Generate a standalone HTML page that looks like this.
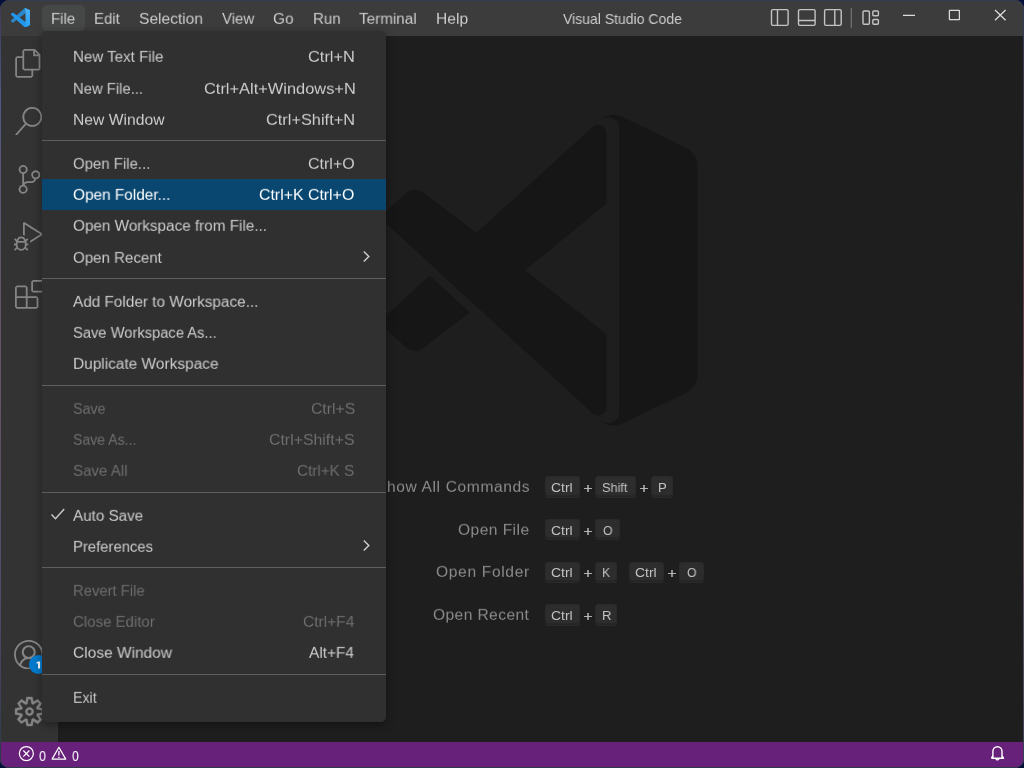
<!DOCTYPE html>
<html><head><meta charset="utf-8"><title>Visual Studio Code</title>
<style>
html,body{margin:0;padding:0;}
body{width:1024px;height:768px;overflow:hidden;background:#020f3a;font-family:"Liberation Sans",sans-serif;position:relative;}
#win{position:absolute;left:0;top:0;width:1024px;height:768px;border-radius:9px;overflow:hidden;background:#1e1e1e;}
#frame{position:absolute;left:0;top:0;width:1022px;height:766px;border:1px solid #343b52;border-bottom-color:#303a4a;border-radius:9px;z-index:20;pointer-events:none;}
#title{position:absolute;left:0;top:0;width:1024px;height:36px;background:#3c3c3c;}
#act{position:absolute;left:0;top:36px;width:57.6px;height:706px;background:#333333;}
#status{position:absolute;left:0;top:742px;width:1024px;height:26px;background:#68217a;}
.t{position:absolute;white-space:nowrap;line-height:normal;z-index:6;transform-origin:0 0;will-change:transform;}
.t.w{z-index:1;}
#filebtn{position:absolute;left:42.3px;top:5px;width:42.4px;height:25.6px;border-radius:5px;background:#464747;}
#menu{position:absolute;left:42px;top:31px;width:344px;height:690.7px;border-radius:5.5px;background:#303031;box-shadow:0 2.4px 9.6px rgba(0,0,0,0.36);z-index:3;}
.sep{position:absolute;left:42px;width:344px;height:1px;background:#5e5e5e;z-index:4;}
.sel{position:absolute;left:42px;width:344px;height:31.3px;background:#094771;z-index:4;}
.chev{position:absolute;z-index:5;}
.ai{position:absolute;z-index:1;}
.key{position:absolute;border-radius:4px;background:#2d2d2d;box-shadow:inset 0 -1.3px 0 #2b2b2b,inset 0 -2.6px 0 #232323,inset 0 0 0 1px #2a2a2a;z-index:1;}
.kt{position:absolute;white-space:nowrap;font-size:13.2px;color:#c4c4c4;line-height:normal;z-index:1;}
</style></head>
<body>
<div id="win">
  <div id="title"></div>
  <div id="filebtn"></div>
  <div id="act"></div>
  <div id="status"></div>
  <svg class="ai" style="left:384.8px;top:113.6px;overflow:visible" width="312.4" height="312.4" viewBox="0 0 100 100" fill="#161616">
 <defs>
  <clipPath id="cu"><polygon points="-5,-5 105,-5 105,131.29 -5,30.08"/></clipPath>
  <clipPath id="cl"><polygon points="-5,33.98 105,135.19 105,150 -5,150"/></clipPath>
 </defs>
 <path d="M70.87 28.75 L44.85 50 L12.1338 74.9905 C10.5347 76.2036 8.29793 76.1042 6.81272 74.7541 L1.30308 69.7452 C-0.513607 68.0937 -0.515693 65.2373 1.29858 63.5832 L66.44 4.19 A2.65 2.65 0 0 1 70.87 6.15 Z" clip-path="url(#cu)"/>
 <path d="M70.87 28.75 L44.85 50 L12.1338 74.9905 C10.5347 76.2036 8.29793 76.1042 6.81272 74.7541 L1.30308 69.7452 C-0.513607 68.0937 -0.515693 65.2373 1.29858 63.5832 L66.44 4.19 A2.65 2.65 0 0 1 70.87 6.15 Z" clip-path="url(#cl)"/>
 <path d="M12.1338 25.0095 L44.85 50 L70.87 70.39 L70.87 93.85 A2.65 2.65 0 0 1 66.44 95.81 L1.6 36.15 C-0.3 34.6 -0.513607 31.9063 1.30308 30.2548 L6.81272 25.2459 C8.29793 23.8958 10.5347 23.7964 12.1338 25.0095Z"/>
 <path d="M75.8578 99.1263C73.4721 100.274 70.6219 99.7885 68.75 97.9166C71.0564 100.223 75 98.5895 75 95.3278V4.67213C75 1.41039 71.0564 -0.223106 68.75 2.08329C70.6219 0.211402 73.4721 -0.273666 75.8578 0.873633L96.4587 10.7807C98.6234 11.8217 100 14.4112 100 16.4132V83.5871C100 85.9891 98.6234 88.1786 96.4586 89.2196L75.8578 99.1263Z"/>
</svg>
<div class="key" style="left:545.3px;top:475.9px;width:34.5px;height:22.1px"></div>
<div class="key" style="left:594.8px;top:475.9px;width:41.2px;height:22.1px"></div>
<div class="key" style="left:650.8px;top:475.9px;width:21.8px;height:22.1px"></div>
<div class="key" style="left:545.3px;top:519px;width:34.5px;height:21.2px"></div>
<div class="key" style="left:594.8px;top:519px;width:25.2px;height:21.2px"></div>
<div class="key" style="left:545.3px;top:561.7px;width:34.5px;height:21.1px"></div>
<div class="key" style="left:594.8px;top:561.7px;width:22.0px;height:21.1px"></div>
<div class="key" style="left:629.3px;top:561.7px;width:34.6px;height:21.1px"></div>
<div class="key" style="left:679.1px;top:561.7px;width:24.7px;height:21.1px"></div>
<div class="key" style="left:545.3px;top:604.4px;width:34.5px;height:21.7px"></div>
<div class="key" style="left:594.8px;top:604.4px;width:22.0px;height:21.7px"></div>
<svg class="ai" style="left:540px;top:470px" width="180" height="170" viewBox="540 470 180 170" fill="none"><path d="M584 488.5H592" stroke="#aeaeae" stroke-width="1"/><path d="M588 485V492" stroke="#c0c0c0" stroke-width="1.4"/><path d="M640 488.5H648" stroke="#aeaeae" stroke-width="1"/><path d="M644 485V492" stroke="#c0c0c0" stroke-width="1.4"/><path d="M584 531.5H592" stroke="#aeaeae" stroke-width="1"/><path d="M588 528V535" stroke="#c0c0c0" stroke-width="1.4"/><path d="M584 573.5H592" stroke="#aeaeae" stroke-width="1"/><path d="M588 570V577" stroke="#c0c0c0" stroke-width="1.4"/><path d="M668 573.5H676" stroke="#aeaeae" stroke-width="1"/><path d="M672 570V577" stroke="#c0c0c0" stroke-width="1.4"/><path d="M584 616.5H592" stroke="#aeaeae" stroke-width="1"/><path d="M588 613V620" stroke="#c0c0c0" stroke-width="1.4"/></svg>
  <svg class="ai" style="left:10.9px;top:7.8px;z-index:2" width="19.3" height="19.3" viewBox="0 0 100 100">
 <defs><linearGradient id="lg1" x1="0" y1="0" x2="0" y2="1"><stop offset="0" stop-color="#4fb2f8"/><stop offset="1" stop-color="#22a0f6"/></linearGradient></defs>
 <path fill="#2b87cb" d="M96.4614 10.7962L75.8569 0.875542C73.4719 -0.272773 70.6217 0.211611 68.75 2.08333L1.29858 63.5832C-0.515693 65.2373 -0.513607 68.0937 1.30308 69.7452L6.81272 74.7541C8.29793 76.1042 10.5347 76.2036 12.1338 74.9905L93.3609 13.3699C96.086 11.3026 100 13.2462 100 16.6667V16.4275C100 14.0265 98.6246 11.8378 96.4614 10.7962Z"/>
 <path fill="#2197ec" d="M96.4614 89.2038L75.8569 99.1245C73.4719 100.273 70.6217 99.7884 68.75 97.9167L1.29858 36.4169C-0.515693 34.7627 -0.513607 31.9063 1.30308 30.2548L6.81272 25.2459C8.29793 23.8958 10.5347 23.7964 12.1338 25.0095L93.3609 86.6301C96.086 88.6974 100 86.7538 100 83.3334V83.5726C100 85.9735 98.6246 88.1622 96.4614 89.2038Z"/>
 <path fill="url(#lg1)" d="M75.8578 99.1263C73.4721 100.274 70.6219 99.7885 68.75 97.9166C71.0564 100.223 75 98.5895 75 95.3278V4.67213C75 1.41039 71.0564 -0.223106 68.75 2.08329C70.6219 0.211402 73.4721 -0.273666 75.8578 0.873633L96.4587 10.7807C98.6234 11.8217 100 14.0112 100 16.4132V83.5871C100 85.9891 98.6234 88.1786 96.4586 89.2196L75.8578 99.1263Z"/>
</svg>
<!-- layout controls -->
<svg class="ai" style="left:768px;top:6px;z-index:2" width="116" height="24" viewBox="768 6 116 24" fill="none" stroke="#c4c4c4" stroke-width="1.4">
 <rect x="771.5" y="9.6" width="16.6" height="15.8" rx="1.3"/><line x1="777.5" y1="9.6" x2="777.5" y2="25.4"/>
 <rect x="798.5" y="9.6" width="16.6" height="15.8" rx="1.3"/><line x1="798.5" y1="20.5" x2="815.1" y2="20.5"/>
 <rect x="824.6" y="9.6" width="16.6" height="15.8" rx="1.3"/><line x1="834.8" y1="9.6" x2="834.8" y2="25.4"/>
 <line x1="851.3" y1="7.9" x2="851.3" y2="27.8" stroke="#7a7a7a" stroke-width="1.1"/>
 <rect x="863" y="11" width="6.4" height="13.3" rx="1.2"/>
 <rect x="872.8" y="11" width="5.6" height="4.8" rx="1"/>
 <rect x="872.8" y="19.5" width="5.6" height="4.8" rx="1"/>
</svg>
<!-- window controls -->
<svg class="ai" style="left:896px;top:4px;z-index:2" width="120" height="24" viewBox="896 4 120 24" fill="none" stroke="#dcdcdc" stroke-width="1.25">
 <line x1="903" y1="15.4" x2="915" y2="15.4"/>
 <rect x="949.4" y="10.4" width="10" height="9.2" rx="0.3"/>
 <path d="M995 10 L1005.6 20.3 M1005.6 10 L995 20.3"/>
</svg>
<!-- activity bar icons (24 viewBox, 28.8px) -->
<svg class="ai" style="left:14.4px;top:49px" width="28.8" height="28.8" viewBox="0 0 24 24" fill="#858585"><path d="M17.5 0h-9L7 1.500V6H2.500L1 7.500v15.070L2.500 24h12.070L16 22.570V18h4.700l1.300-1.430V4.500L17.500 0zm0 2.120l2.380 2.380H17.500V2.120zm-3 20.380h-12v-15H7v9.070L8.500 18h6v4.500zm6-6h-12v-15H16V6h4.500v10.500z"/></svg>
<svg class="ai" style="left:14.4px;top:106.6px" width="28.8" height="28.8" viewBox="0 0 24 24" fill="#858585"><path d="M15.250 0a8.250 8.250 0 0 0-6.180 13.720L1 22.880l1.120 1 8.050-9.120A8.251 8.251 0 1 0 15.250.010V0zm0 15a6.750 6.750 0 1 1 0-13.500 6.750 6.750 0 0 1 0 13.500z"/></svg>
<svg class="ai" style="left:14.9px;top:165.2px" width="28.8" height="28.8" viewBox="0 0 24 24" fill="#858585"><path d="M21.007 8.222A3.738 3.738 0 0 0 15.045 5.200a3.737 3.737 0 0 0 1.156 6.583 2.988 2.988 0 0 1-2.668 1.670h-2.990a4.456 4.456 0 0 0-2.989 1.165V7.400a3.737 3.737 0 1 0-1.494 0v9.117a3.776 3.776 0 1 0 1.816.099 2.990 2.990 0 0 1 2.668-1.667h2.990a4.484 4.484 0 0 0 4.223-3.039 3.736 3.736 0 0 0 3.250-3.687zM4.565 3.738a2.242 2.242 0 1 1 4.484 0 2.242 2.242 0 0 1-4.484 0zm4.484 16.441a2.242 2.242 0 1 1-4.484 0 2.242 2.242 0 0 1 4.484 0zm8.221-9.715a2.242 2.242 0 1 1 0-4.485 2.242 2.242 0 0 1 0 4.485z"/></svg>
<svg class="ai" style="left:14.4px;top:221.8px" width="28.8" height="28.8" viewBox="0 0 24 24" fill="#858585"><path d="M10.940 13.500l-1.320 1.320a3.730 3.730 0 0 0-7.240 0L1.060 13.500 0 14.560l1.720 1.720-.220.220V18H0v1.500h1.500v.080c.077.489.214.966.410 1.420L0 22.940 1.060 24l1.650-1.650A4.308 4.308 0 0 0 6 24a4.310 4.310 0 0 0 3.290-1.650L10.940 24 12 22.940 10.090 21c.198-.464.336-.951.410-1.450v-.100H12V18h-1.500v-1.500l-.220-.220L12 14.560l-1.060-1.060zM6 13.500a2.250 2.250 0 0 1 2.250 2.250h-4.500A2.250 2.250 0 0 1 6 13.500zm3 6a3.330 3.330 0 0 1-3 3 3.330 3.330 0 0 1-3-3v-2.250h6v2.250zm14.760-9.900v1.260L13.500 17.370V15.600l8.500-5.370L9 2v9.460a5.070 5.070 0 0 0-1.500-.720V.630L8.640 0l15.120 9.600z"/></svg>
<svg class="ai" style="left:15px;top:280.4px" width="28.8" height="28.8" viewBox="0 0 24 24" fill="#858585"><path d="M13.500 1.500L15 0h7.500L24 1.500V9l-1.500 1.500H15L13.500 9V1.500zm1.500 0V9h7.500V1.500H15zM0 15V6l1.500-1.500H9L10.500 6v7.500H18l1.500 1.500v7.500L18 24H1.500L0 22.500V15zm9-1.500V6H1.500v7.500H9zM9 15H1.500v7.500H9V15zm1.500 7.500H18V15h-7.500v7.500z"/></svg>
<svg class="ai" style="left:14px;top:639.6px" width="29.5" height="29.5" viewBox="0 0 16 16" fill="#858585"><path d="M16 7.992C16 3.580 12.416 0 8 0S0 3.580 0 7.992c0 2.430 1.104 4.620 2.832 6.090.016.016.032.016.032.032.144.112.288.224.448.336.080.048.144.111.224.175A7.980 7.980 0 0 0 8.016 16a7.980 7.980 0 0 0 4.480-1.375c.080-.048.144-.111.224-.160.144-.111.304-.223.448-.335.016-.016.032-.016.032-.032 1.696-1.487 2.800-3.676 2.800-6.106zm-8 7.001c-1.504 0-2.880-.480-4.016-1.279.016-.128.048-.255.080-.383a4.170 4.170 0 0 1 .416-.991c.176-.304.384-.576.640-.816.240-.240.528-.463.816-.639.304-.176.624-.304.976-.400A4.150 4.150 0 0 1 8 10.342a4.185 4.185 0 0 1 2.928 1.166c.368.368.656.800.864 1.295.112.288.192.592.240.911A7.030 7.030 0 0 1 8 14.993zm-2.448-7.400a2.490 2.490 0 0 1-.208-1.024c0-.351.064-.703.208-1.023.144-.320.336-.607.576-.847.240-.240.528-.431.848-.575.320-.144.672-.208 1.024-.208.368 0 .704.064 1.024.208.320.144.608.336.848.575.240.240.432.528.576.847.144.320.208.672.208 1.023 0 .368-.064.704-.208 1.023a2.840 2.840 0 0 1-.576.848 2.840 2.840 0 0 1-.848.575 2.715 2.715 0 0 1-2.064 0 2.840 2.840 0 0 1-.848-.575 2.526 2.526 0 0 1-.560-.848zm7.424 5.306c0-.032-.016-.048-.016-.080a5.220 5.220 0 0 0-.688-1.406 4.883 4.883 0 0 0-1.088-1.135 5.207 5.207 0 0 0-1.040-.608 2.820 2.820 0 0 0 .464-.383 4.200 4.200 0 0 0 .624-.784 3.624 3.624 0 0 0 .528-1.934 3.710 3.710 0 0 0-.288-1.470 3.799 3.799 0 0 0-.816-1.199 3.845 3.845 0 0 0-1.200-.800 3.720 3.720 0 0 0-1.472-.287 3.720 3.720 0 0 0-1.472.288 3.631 3.631 0 0 0-1.200.815 3.840 3.840 0 0 0-.800 1.199 3.710 3.710 0 0 0-.288 1.470c0 .352.048.688.144 1.007.096.336.224.640.400.927.160.288.384.544.624.784.144.144.304.271.480.383a5.120 5.120 0 0 0-1.040.624c-.416.320-.784.703-1.088 1.119a4.999 4.999 0 0 0-.688 1.406c-.16.032-.16.064-.16.080C1.776 11.636.992 9.910.992 7.992.992 4.140 4.144.991 8 .991s7.008 3.149 7.008 7.001a6.960 6.960 0 0 1-2.032 4.907z"/></svg>
<div class="ai" style="left:28.8px;top:655.2px;width:19.2px;height:19.2px;border-radius:10px;background:#007acc;z-index:2"></div>
<svg class="ai" style="left:30px;top:656px;z-index:2" width="16" height="16" viewBox="30 656 16 16"><path d="M38 661.4H40.1V668.6H38V663.1L36.6 664V662.5Z" fill="#fff"/></svg>
<svg class="ai" style="left:12.7px;top:694.9px" width="33" height="33" viewBox="0 0 16 16" fill="#858585" stroke="#858585" stroke-width="0.2" stroke-linejoin="round"><path fill-rule="evenodd" d="M9.100 4.400L8.600 2H7.400l-.500 2.400-.700.300-2-1.300-.900.800 1.300 2-.200.700-2.400.500v1.200l2.400.500.300.800-1.300 2 .800.800 2-1.300.800.300.400 2.300h1.200l.500-2.400.800-.300 2 1.300.800-.800-1.300-2 .300-.800 2.300-.400V7.400l-2.400-.500-.300-.800 1.300-2-.800-.800-2 1.300-.700-.200zM9.400 1l.500 2.400L12 2.100l2 2-1.400 2.100 2.400.400v2.800l-2.400.500L14 12l-2 2-2.100-1.400-.500 2.400H6.600l-.500-2.400L4 13.900l-2-2 1.400-2.100L1 9.400V6.600l2.400-.500L2.100 4l2-2 2.100 1.400.400-2.400h2.800zm.600 7c0 1.100-.900 2-2 2s-2-.900-2-2 .900-2 2-2 2 .900 2 2zM8 9c.600 0 1-.400 1-1s-.400-1-1-1-1 .400-1 1 .400 1 1 1z"/></svg>
<!-- status bar -->
<svg class="ai" style="left:16px;top:743px;z-index:2" width="70" height="22" viewBox="16 743 70 22" fill="none" stroke="#ffffff" stroke-width="1.25">
 <circle cx="26.35" cy="753.5" r="7"/>
 <path d="M23.3 750.5 L29.4 756.6 M29.4 750.5 L23.3 756.6"/>
 <path d="M58.9 747.3 L65.7 759.1 L52.1 759.1 Z" stroke-linejoin="round"/>
 <path d="M58.9 751 L58.9 755.6 M58.9 756.7 L58.9 758" stroke-width="1.3"/>
</svg>
<svg class="ai" style="left:988px;top:743px;z-index:2" width="20" height="22" viewBox="988 743 20 22" fill="none" stroke="#ffffff" stroke-width="1.4">
 <path d="M992.9 757.9 L992.9 751.3 A4.55 4.55 0 0 1 1002 751.3 L1002 757.9 M991.4 758.2 L1003.5 758.2 L1002.2 756 M991.4 758.2 L992.7 756" stroke-linejoin="round"/>
 <path d="M996 758.4 A1.45 1.45 0 0 0 998.9 758.4"/>
</svg>

  <div id="menu"></div>
  <div class="sep" style="top:140px"></div>
<div class="sel" style="top:178.9px"></div>
<svg class="chev" style="left:358px;top:247px" width="16" height="20" viewBox="358 247 16 20"><path d="M363.8 251.6 L368.8 256.5 L363.8 261.4" fill="none" stroke="#cccccc" stroke-width="1.45"/></svg>
<div class="sep" style="top:278px"></div>
<div class="sep" style="top:385px"></div>
<div class="sep" style="top:492px"></div>
<svg class="chev" style="left:46px;top:503px" width="24" height="22" viewBox="46 503 24 22"><path d="M51.5 514.5 L55.5 518.7 L64.2 509" fill="none" stroke="#cccccc" stroke-width="1.4"/></svg>
<svg class="chev" style="left:358px;top:536px" width="16" height="20" viewBox="358 536 16 20"><path d="M363.8 540.6 L368.8 545.5 L363.8 550.4" fill="none" stroke="#cccccc" stroke-width="1.45"/></svg>
<div class="sep" style="top:567px"></div>
<div class="sep" style="top:674px"></div>
  <span class="t " style="left:51.34px;top:11.17px;font-size:15.6px;color:#cccccc;transform:scale(0.9593,0.9167)">File</span>
<span class="t " style="left:93.54px;top:11.17px;font-size:15.6px;color:#cccccc;transform:scale(0.9609,0.9167)">Edit</span>
<span class="t " style="left:138.60px;top:11.17px;font-size:15.6px;color:#cccccc;transform:scale(0.9960,0.9167)">Selection</span>
<span class="t " style="left:221.90px;top:11.17px;font-size:15.6px;color:#cccccc;transform:scale(0.9618,0.9167)">View</span>
<span class="t " style="left:273.08px;top:11.17px;font-size:15.6px;color:#cccccc;transform:scale(0.9828,0.9167)">Go</span>
<span class="t " style="left:312.53px;top:11.17px;font-size:15.6px;color:#cccccc;transform:scale(0.9653,0.9167)">Run</span>
<span class="t " style="left:359.40px;top:11.17px;font-size:15.6px;color:#cccccc;transform:scale(0.9784,0.9167)">Terminal</span>
<span class="t " style="left:435.50px;top:11.17px;font-size:15.6px;color:#cccccc;transform:scale(1.0018,0.9167)">Help</span>
<span class="t " style="left:563.20px;top:11.00px;font-size:14.4px;color:#cccccc;transform:scale(0.9727,1.0000)">Visual Studio Code</span>
<span class="t " style="left:73.13px;top:49.17px;font-size:15.6px;color:#cccccc;transform:scale(0.9683,0.9167)">New Text File</span>
<span class="t " style="left:308.40px;top:49.17px;font-size:15.6px;color:#cccccc;transform:scale(1.0517,0.9167)">Ctrl+N</span>
<span class="t " style="left:73.15px;top:81.17px;font-size:15.6px;color:#cccccc;transform:scale(0.9507,0.9167)">New File...</span>
<span class="t " style="left:203.92px;top:81.17px;font-size:15.6px;color:#cccccc;transform:scale(1.0519,0.9167)">Ctrl+Alt+Windows+N</span>
<span class="t " style="left:73.09px;top:112.17px;font-size:15.6px;color:#cccccc;transform:scale(1.0052,0.9167)">New Window</span>
<span class="t " style="left:266.24px;top:112.17px;font-size:15.6px;color:#cccccc;transform:scale(1.0482,0.9167)">Ctrl+Shift+N</span>
<span class="t " style="left:72.60px;top:156.17px;font-size:15.6px;color:#cccccc;transform:scale(0.9589,0.9167)">Open File...</span>
<span class="t " style="left:308.40px;top:156.17px;font-size:15.6px;color:#cccccc;transform:scale(1.0273,0.9167)">Ctrl+O</span>
<span class="t " style="left:72.60px;top:187.17px;font-size:15.6px;color:#ffffff;transform:scale(0.9849,0.9167)">Open Folder...</span>
<span class="t " style="left:259.46px;top:187.17px;font-size:15.6px;color:#ffffff;transform:scale(1.0176,0.9167)">Ctrl+K Ctrl+O</span>
<span class="t " style="left:72.60px;top:218.17px;font-size:15.6px;color:#cccccc;transform:scale(0.9793,0.9167)">Open Workspace from File...</span>
<span class="t " style="left:72.60px;top:250.17px;font-size:15.6px;color:#cccccc;transform:scale(0.9664,0.9167)">Open Recent</span>
<span class="t " style="left:73.20px;top:294.17px;font-size:15.6px;color:#cccccc;transform:scale(0.9828,0.9167)">Add Folder to Workspace...</span>
<span class="t " style="left:73.08px;top:325.17px;font-size:15.6px;color:#cccccc;transform:scale(0.9436,0.9167)">Save Workspace As...</span>
<span class="t " style="left:73.11px;top:356.17px;font-size:15.6px;color:#cccccc;transform:scale(0.9891,0.9167)">Duplicate Workspace</span>
<span class="t " style="left:73.08px;top:401.17px;font-size:15.6px;color:#6e6e6e;transform:scale(0.9162,0.9167)">Save</span>
<span class="t " style="left:311.08px;top:401.17px;font-size:15.6px;color:#6e6e6e;transform:scale(1.0098,0.9167)">Ctrl+S</span>
<span class="t " style="left:73.08px;top:432.17px;font-size:15.6px;color:#6e6e6e;transform:scale(0.9021,0.9167)">Save As...</span>
<span class="t " style="left:269.46px;top:432.17px;font-size:15.6px;color:#6e6e6e;transform:scale(1.0170,0.9167)">Ctrl+Shift+S</span>
<span class="t " style="left:73.08px;top:463.17px;font-size:15.6px;color:#6e6e6e;transform:scale(0.9671,0.9167)">Save All</span>
<span class="t " style="left:297.32px;top:463.17px;font-size:15.6px;color:#6e6e6e;transform:scale(0.9801,0.9167)">Ctrl+K S</span>
<span class="t " style="left:73.20px;top:508.17px;font-size:15.6px;color:#cccccc;transform:scale(0.9750,0.9167)">Auto Save</span>
<span class="t " style="left:73.15px;top:539.17px;font-size:15.6px;color:#cccccc;transform:scale(0.9520,0.9167)">Preferences</span>
<span class="t " style="left:73.15px;top:583.17px;font-size:15.6px;color:#6e6e6e;transform:scale(0.9496,0.9167)">Revert File</span>
<span class="t " style="left:72.92px;top:614.17px;font-size:15.6px;color:#6e6e6e;transform:scale(0.9629,0.9167)">Close Editor</span>
<span class="t " style="left:303.32px;top:614.17px;font-size:15.6px;color:#6e6e6e;transform:scale(0.9942,0.9167)">Ctrl+F4</span>
<span class="t " style="left:72.92px;top:645.17px;font-size:15.6px;color:#cccccc;transform:scale(0.9927,0.9167)">Close Window</span>
<span class="t " style="left:309.30px;top:645.17px;font-size:15.6px;color:#cccccc;transform:scale(0.9884,0.9167)">Alt+F4</span>
<span class="t " style="left:73.20px;top:690.17px;font-size:15.6px;color:#cccccc;transform:scale(0.9041,0.9167)">Exit</span>
<span class="t w" style="left:375.50px;top:479.17px;font-size:15.6px;color:#8b8b8b;letter-spacing:0.611px;transform:scale(1,0.9167)">Show All Commands</span>
<span class="t w" style="left:458.24px;top:522.17px;font-size:15.6px;color:#8b8b8b;letter-spacing:0.433px;transform:scale(1,0.9167)">Open File</span>
<span class="t w" style="left:436.32px;top:564.17px;font-size:15.6px;color:#8b8b8b;letter-spacing:0.649px;transform:scale(1,0.9167)">Open Folder</span>
<span class="t w" style="left:433.02px;top:607.17px;font-size:15.6px;color:#8b8b8b;letter-spacing:0.397px;transform:scale(1,0.9167)">Open Recent</span>
<span class="t w" style="left:551.40px;top:480.00px;font-size:13.2px;color:#c2c2c2;transform:scale(1.0574,1.0000)">Ctrl</span>
<span class="t w" style="left:551.40px;top:523.00px;font-size:13.2px;color:#c2c2c2;transform:scale(1.0574,1.0000)">Ctrl</span>
<span class="t w" style="left:551.40px;top:565.00px;font-size:13.2px;color:#c2c2c2;transform:scale(1.0574,1.0000)">Ctrl</span>
<span class="t w" style="left:551.40px;top:608.00px;font-size:13.2px;color:#c2c2c2;transform:scale(1.0574,1.0000)">Ctrl</span>
<span class="t w" style="left:601.76px;top:480.00px;font-size:13.2px;color:#c2c2c2;transform:scale(0.9654,1.0000)">Shift</span>
<span class="t w" style="left:657.61px;top:480.00px;font-size:13.2px;color:#c2c2c2;transform:scale(0.9851,1.0000)">P</span>
<span class="t w" style="left:602.75px;top:523.00px;font-size:13.2px;color:#c2c2c2;transform:scale(0.9350,1.0000)">O</span>
<span class="t w" style="left:601.98px;top:565.00px;font-size:13.2px;color:#c2c2c2;transform:scale(0.9250,1.0000)">K</span>
<span class="t w" style="left:635.46px;top:565.00px;font-size:13.2px;color:#c2c2c2;transform:scale(1.0574,1.0000)">Ctrl</span>
<span class="t w" style="left:686.80px;top:565.00px;font-size:13.2px;color:#c2c2c2;transform:scale(0.9300,1.0000)">O</span>
<span class="t w" style="left:601.92px;top:608.00px;font-size:13.2px;color:#c2c2c2;transform:scale(0.9750,1.0000)">R</span>
<span class="t " style="left:39.10px;top:748.00px;font-size:14.4px;color:#ffffff;transform:scale(0.8750,1.0000)">0</span>
<span class="t " style="left:72.10px;top:748.00px;font-size:14.4px;color:#ffffff;transform:scale(0.8500,1.0000)">0</span>
</div>
<div id="frame"></div>
<div style="position:absolute;left:0;top:9px;width:1px;height:750px;z-index:21;background:linear-gradient(180deg,#3c3c5a 0%,#525886 12%,#60566c 32%,#625464 50%,#524a6c 78%,#303a4a 100%)"></div>
<div style="position:absolute;left:1023px;top:9px;width:1px;height:750px;z-index:21;background:linear-gradient(180deg,#343a54 0%,#3a3a4a 12%,#5e4044 39%,#70626c 72%,#3a3e54 100%)"></div>
</body></html>
